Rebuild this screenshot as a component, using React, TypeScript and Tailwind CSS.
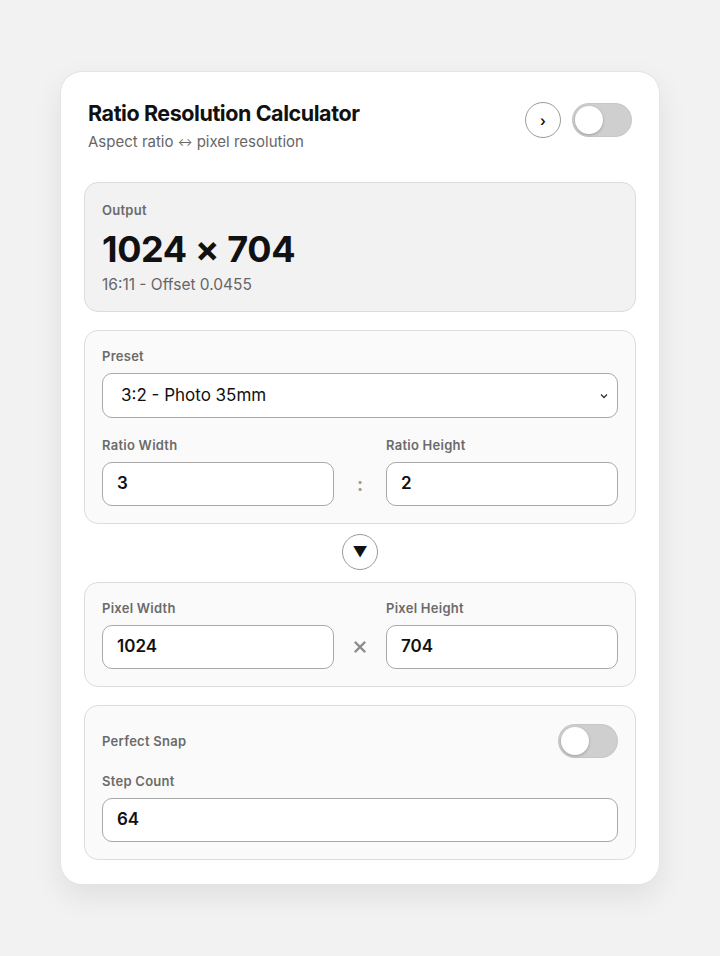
import React from 'react';

function Toggle() {
  return (
    <div className="w-[60px] h-[34px] rounded-full bg-[#cfcfcf] p-[3px] flex items-center shadow-[inset_0_0_0_1px_rgba(0,0,0,0.04)]">
      <div className="w-[28px] h-[28px] rounded-full bg-white shadow-[0_1px_3px_rgba(0,0,0,0.25)]" />
    </div>
  );
}

function Label({ children }: { children: React.ReactNode }) {
  return <div className="text-[13px] font-semibold text-[#6b6b6b] tracking-[0.02em] leading-[16px]">{children}</div>;
}

function Field({ value }: { value: string }) {
  return (
    <div className="h-[44px] rounded-[10px] border border-[#a9a9a9] bg-white flex items-center px-[14px] text-[17px] font-semibold text-[#111]">
      {value}
    </div>
  );
}

export default function App() {
  return (
    <div className="min-h-screen bg-[#f2f2f2] pt-[71px]" style={{ fontFamily: 'Inter, "Noto Sans", sans-serif' }}>
      <div className="mx-auto w-[600px] bg-white rounded-[22px] border border-[#e4e4e4] shadow-[0_12px_30px_rgba(0,0,0,0.08)] px-[23px] pt-[27px] pb-[24px]">
        <div className="flex items-start justify-between pl-[4px]">
          <div>
            <div className="text-[21.5px] font-bold text-[#111] leading-[28px] tracking-[-0.02em]">Ratio Resolution Calculator</div>
            <div className="text-[15px] text-[#666] leading-[20px] mt-[5px]">
              Aspect ratio <span className="text-[11px] align-[1px]">↔</span> pixel resolution
            </div>
          </div>
          <div className="flex items-center gap-[11px] mt-[3px] mr-[4px]">
            <div className="w-[36px] h-[36px] rounded-full border border-[#9a9a9a] bg-white flex items-center justify-center text-[14px] text-[#111] font-semibold">›</div>
            <Toggle />
          </div>
        </div>

        <div className="mt-[30px] rounded-[14px] border border-[#dcdcdc] bg-[#f2f2f2] px-[17px] pt-[19px] pb-[16px]">
          <Label>Output</Label>
          <div className="text-[36px] font-bold text-[#111] leading-[44px] mt-[9px] tracking-[-0.01em]">1024 × 704</div>
          <div className="text-[15.5px] text-[#666] leading-[20px] mt-[4px]">16:11 - Offset 0.0455</div>
        </div>

        <div className="mt-[18px] rounded-[14px] border border-[#dcdcdc] bg-[#fafafa] px-[17px] pt-[17px] pb-[17px]">
          <Label>Preset</Label>
          <div className="mt-[9px] h-[45px] rounded-[10px] border border-[#a9a9a9] bg-white flex items-center justify-between pl-[18px] pr-[8px] text-[17px] text-[#111]">
            <span>3:2 - Photo 35mm</span>
            <svg width="10" height="10" viewBox="0 0 10 10" fill="none" stroke="#333" strokeWidth="1.3"><path d="M2 3.5 L5 6.5 L8 3.5" /></svg>
          </div>
          <div className="mt-[19px] flex items-end">
            <div className="flex-1">
              <Label>Ratio Width</Label>
              <div className="mt-[9px]"><Field value="3" /></div>
            </div>
            <div className="w-[52px] h-[44px] flex items-center justify-center text-[18px] font-bold text-[#999]">:</div>
            <div className="flex-1">
              <Label>Ratio Height</Label>
              <div className="mt-[9px]"><Field value="2" /></div>
            </div>
          </div>
        </div>

        <div className="flex justify-center mt-[10px]">
          <div className="w-[36px] h-[36px] rounded-full border border-[#9a9a9a] bg-white flex items-center justify-center text-[15px] text-[#111]">▼</div>
        </div>

        <div className="mt-[12px] rounded-[14px] border border-[#dcdcdc] bg-[#fafafa] px-[17px] pt-[17px] pb-[17px]">
          <div className="flex items-end">
            <div className="flex-1">
              <Label>Pixel Width</Label>
              <div className="mt-[9px]"><Field value="1024" /></div>
            </div>
            <div className="w-[52px] h-[44px] flex items-center justify-center text-[#8a8a8a]">
              <svg width="14" height="14" viewBox="0 0 14 14" stroke="#8a8a8a" strokeWidth="2.4" strokeLinecap="round"><path d="M2.5 2.5 L11.5 11.5 M11.5 2.5 L2.5 11.5" /></svg>
            </div>
            <div className="flex-1">
              <Label>Pixel Height</Label>
              <div className="mt-[9px]"><Field value="704" /></div>
            </div>
          </div>
        </div>

        <div className="mt-[18px] rounded-[14px] border border-[#dcdcdc] bg-[#fafafa] px-[17px] pt-[18px] pb-[17px]">
          <div className="flex items-center justify-between">
            <Label>Perfect Snap</Label>
            <Toggle />
          </div>
          <div className="mt-[15px]"><Label>Step Count</Label></div>
          <div className="mt-[9px]"><Field value="64" /></div>
        </div>
      </div>
    </div>
  );
}
